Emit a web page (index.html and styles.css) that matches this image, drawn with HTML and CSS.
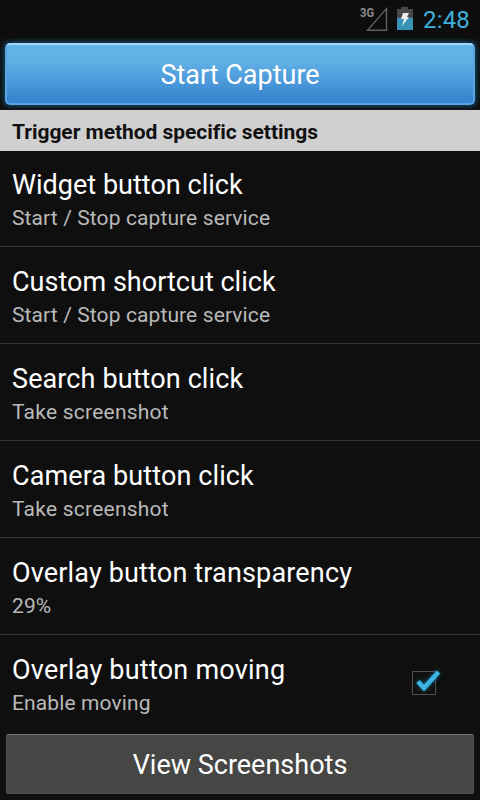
FILE: index.html
```html
<!DOCTYPE html>
<html lang="en">
<head>
<meta charset="utf-8">
<title>Screenshot settings</title>
<link rel="stylesheet" href="styles.css">
</head>
<body>
<div class="status">
<svg class="signal" width="30" height="28" viewBox="0 0 30 28"><text x="1" y="12" class="net" textLength="14" lengthAdjust="spacingAndGlyphs">3G</text><path d="M8.500 25.300H27.500V3.500Z" fill="none" stroke="#606060" stroke-width="1.400"/></svg>
<svg class="battery" width="16" height="24" viewBox="0 0 16 24"><path d="M4 0h7v2h5v9H0V2h4z" fill="#484848"/><path d="M0 11h16v12H0z" fill="#3593b5"/><path d="M6 6h6l-2 4h2l-7 9 2-7H4z" fill="#eee"/></svg>
<span class="clock">2:48</span>
</div>
<div class="start-wrap"><button class="start">Start Capture</button></div>
<h2 class="section">Trigger method specific settings</h2>
<div class="list">
<div class="row"><div class="title">Widget button click</div><div class="sub">Start / Stop capture service</div></div>
<div class="row"><div class="title">Custom shortcut click</div><div class="sub">Start / Stop capture service</div></div>
<div class="row"><div class="title mid">Search button click</div><div class="sub mid">Take screenshot</div></div>
<div class="row"><div class="title mid">Camera button click</div><div class="sub mid">Take screenshot</div></div>
<div class="row"><div class="title wide">Overlay button transparency</div><div class="sub">29%</div></div>
<div class="row check-row"><div><div class="title wider">Overlay button moving</div><div class="sub">Enable moving</div></div>
<svg class="check" width="40" height="36" viewBox="0 0 40 36"><path d="M6.500 7.500h23v23h-23z" fill="none" stroke="#505050"/><path class="tick" d="M12 17.500l6 6.500L32.500 8" fill="none" stroke="#3db4e3" stroke-width="4.600"/></svg></div>
</div>
<button class="view">View Screenshots</button>
</body>
</html>
```
FILE: styles.css
```css
*{box-sizing:border-box}
body{margin:0;width:480px;height:800px;overflow:hidden;background:#0f0f0f;color:#fff;font-family:Roboto,sans-serif;display:flex;flex-direction:column}
.status{height:38px;background:#0d0d0d;display:flex;align-items:center;justify-content:flex-end;padding-right:10px}
.signal{margin-right:8px}
.battery{margin-right:10px;margin-top:0}
.net{font:bold 12.5px Roboto,sans-serif;fill:#8c8c8c}
.clock{font-size:24px;letter-spacing:.15px;color:#41afdc;padding-top:1px}
.start-wrap{height:72px;padding:5px}
.start{display:block;width:100%;height:62px;border:2px solid #5ba4e0;border-top-color:#a2d8f7;border-radius:5px;background:linear-gradient(#63b5e9,#61b0e5 30%,#3985d0 90%) border-box;box-shadow:0 0 4px 2px #123f58;color:#fff;font:27px Roboto,sans-serif;padding:1px 0 0}
.section{height:41px;margin:0;background:#d0d0d0;color:#111;font-size:21px;line-height:44px;padding-left:12px;letter-spacing:-.04px}
.list{height:583px}
.row{height:97px;border-bottom:1px solid #343434;padding:17px 12px 0}
.row:first-child{height:96px;padding-top:16px}
.row:last-child{border-bottom:0}
.title{font-size:27px;line-height:36px;letter-spacing:.02px}
.title.mid{letter-spacing:.11px}
.title.wide{letter-spacing:.16px}
.title.wider{letter-spacing:.23px}
.sub{font-size:21px;line-height:28px;padding-top:1px;color:#b9b9b9;letter-spacing:.11px}
.sub.mid{letter-spacing:.23px}
.check-row{display:flex;justify-content:space-between}
.check{margin:12px 22px 0 0}
.tick{filter:drop-shadow(0 0 2px #147096)}
.view{height:60px;margin:0 6px;border:1px solid #4e4f4e;border-top-color:#777;border-radius:2px;background:#464745;color:#fff;font:27px Roboto,sans-serif;padding:2px 0 0}
```
